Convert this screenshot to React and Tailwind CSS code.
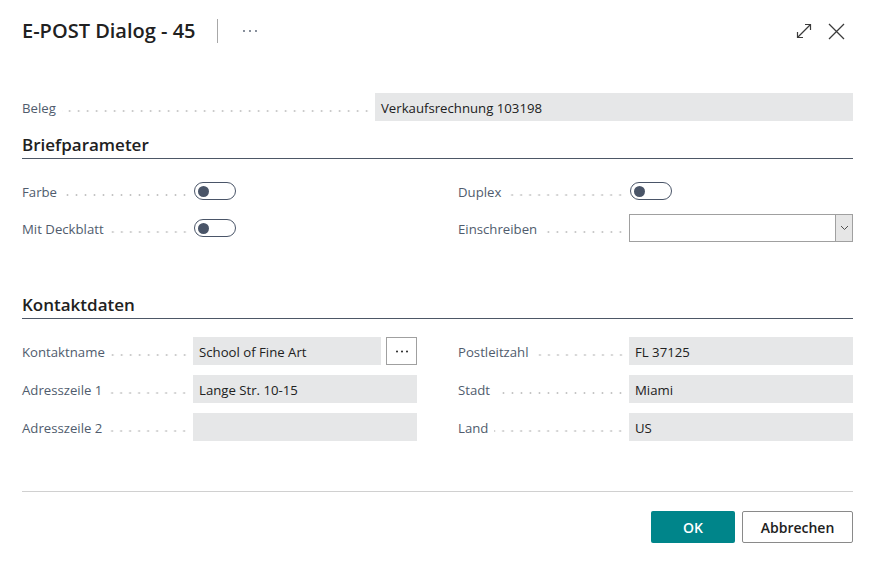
import React from "react";

const FONT = { fontFamily: '"Segoe UI", "Open Sans", "Noto Sans", sans-serif' };

function Leader() {
  return (
    <span className="ml-[6px] mr-[4px] mt-[6px] h-[2px] flex-1 bg-[radial-gradient(circle,#c4c4c4_0.9px,transparent_1.2px)] bg-[length:9px_2px] bg-right bg-repeat-x" />
  );
}

function Label({ children, width = "w-[171px]" }) {
  return (
    <div className={`flex ${width} shrink-0 items-center pt-[3px]`}>
      <span className="whitespace-nowrap text-[13.2px] text-[#505c6d]">{children}</span>
      <Leader />
    </div>
  );
}

function Value({ children, className = "" }) {
  return (
    <div
      className={`flex h-[28px] items-center bg-[#e6e7e8] pl-[6px] pt-[3px] text-[13.2px] text-[#212121] ${className}`}
    >
      {children}
    </div>
  );
}

function Toggle() {
  return (
    <div className="ml-px flex h-[18px] w-[42px] items-center rounded-full border-[1.5px] border-[#4a5568] pl-[3px]">
      <span className="h-[11px] w-[11px] rounded-full bg-[#4a5568]" />
    </div>
  );
}

function Row({ label, children }) {
  return (
    <div className="flex h-[28px] items-center">
      <Label>{label}</Label>
      <div className="flex flex-1 items-center">{children}</div>
    </div>
  );
}

function Heading({ children }) {
  return (
    <div className="border-b border-[#4d5766] pb-[2px] text-[17px] font-semibold leading-[22px] text-[#212121]">
      {children}
    </div>
  );
}

export default function App() {
  return (
    <div className="h-[562px] w-[875px] bg-white" style={FONT}>
      <div className="flex h-[62px] items-center pl-[22px] pr-[30px]">
        <h1 className="text-[20px] font-semibold text-[#212121]">E-POST Dialog - 45</h1>
        <span className="ml-[21px] h-[24px] w-px bg-[#a8a8a8]" />
        <svg className="ml-[24px]" width="16" height="4" viewBox="0 0 16 4">
          <circle cx="2" cy="2" r="0.9" fill="#505c6d" />
          <circle cx="8" cy="2" r="0.9" fill="#505c6d" />
          <circle cx="14" cy="2" r="0.9" fill="#505c6d" />
        </svg>
        <div className="ml-auto flex items-center gap-[16px]">
          <svg width="16" height="16" viewBox="0 0 16 16" fill="none" stroke="#3b3b3b" strokeWidth="1.2">
            <path d="M1.5 14.5 L14.5 1.5" />
            <path d="M9 1.5 H14.5 V7" />
            <path d="M1.5 9 V14.5 H7" />
          </svg>
          <svg width="17" height="17" viewBox="0 0 17 17" fill="none" stroke="#3b3b3b" strokeWidth="1.3">
            <path d="M1 1 L16 16 M16 1 L1 16" />
          </svg>
        </div>
      </div>

      <div className="px-[22px]">
        <div className="mt-[31px] flex h-[28px] items-center">
          <Label width="w-[353px]">Beleg</Label>
          <Value className="flex-1">Verkaufsrechnung 103198</Value>
        </div>

        <div className="mt-[13px]">
          <Heading>Briefparameter</Heading>
        </div>

        <div className="mt-[18px] grid grid-cols-2 gap-x-[41px] gap-y-[9px]">
          <Row label="Farbe">
            <Toggle />
          </Row>
          <Row label="Duplex">
            <Toggle />
          </Row>
          <Row label="Mit Deckblatt">
            <Toggle />
          </Row>
          <Row label="Einschreiben">
            <div className="flex h-[28px] flex-1 border border-[#a0a0a0] bg-white">
              <div className="flex-1" />
              <div className="flex w-[17px] items-center justify-center border-l border-[#a0a0a0] bg-[#e6e6e6]">
                <svg width="9" height="6" viewBox="0 0 9 6" fill="none" stroke="#505050" strokeWidth="1">
                  <path d="M1 1 L4.5 4.5 L8 1" />
                </svg>
              </div>
            </div>
          </Row>
        </div>

        <div className="mt-[52px]">
          <Heading>Kontaktdaten</Heading>
        </div>

        <div className="mt-[18px] grid grid-cols-2 gap-x-[41px] gap-y-[10px]">
          <Row label="Kontaktname">
            <Value className="flex-1">School of Fine Art</Value>
            <button
              type="button"
              className="ml-[5px] flex h-[28px] w-[31px] items-center justify-center border border-[#a0a0a0] bg-white"
            >
              <svg width="14" height="3" viewBox="0 0 14 3">
                <circle cx="2" cy="1.5" r="1" fill="#212121" />
                <circle cx="7" cy="1.5" r="1" fill="#212121" />
                <circle cx="12" cy="1.5" r="1" fill="#212121" />
              </svg>
            </button>
          </Row>
          <Row label="Postleitzahl">
            <Value className="flex-1">FL 37125</Value>
          </Row>
          <Row label="Adresszeile 1">
            <Value className="flex-1">Lange Str. 10-15</Value>
          </Row>
          <Row label="Stadt">
            <Value className="flex-1">Miami</Value>
          </Row>
          <Row label="Adresszeile 2">
            <Value className="flex-1" />
          </Row>
          <Row label="Land">
            <Value className="flex-1">US</Value>
          </Row>
        </div>

        <div className="mt-[50px] border-t border-[#d0d0d0]" />

        <div className="mt-[19px] flex justify-end gap-[7px]">
          <button
            type="button"
            className="h-[32px] w-[84px] rounded-[2px] bg-[#00858a] text-[14px] font-semibold text-white"
          >
            OK
          </button>
          <button
            type="button"
            className="h-[32px] w-[111px] rounded-[2px] border border-[#8a8a8a] bg-white text-[14px] font-semibold text-[#212121]"
          >
            Abbrechen
          </button>
        </div>
      </div>
    </div>
  );
}
